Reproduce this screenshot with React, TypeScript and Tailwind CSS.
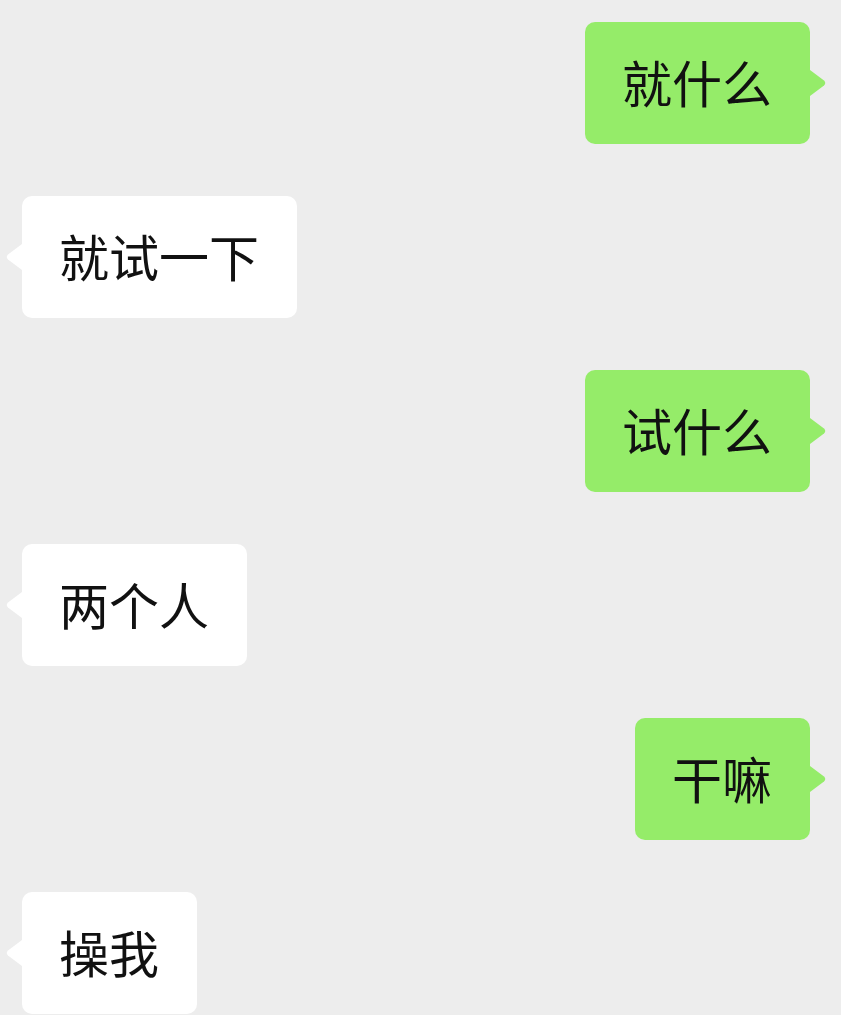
import React from "react";

type Msg = { text: string; mine: boolean };

const messages: Msg[] = [
  { text: "就什么", mine: true },
  { text: "就试一下", mine: false },
  { text: "试什么", mine: true },
  { text: "两个人", mine: false },
  { text: "干嘛", mine: true },
  { text: "操我", mine: false },
];

function Bubble({ text, mine }: Msg) {
  return (
    <div className={mine ? "flex justify-end pr-[31px]" : "flex justify-start pl-[22px]"}>
      <div
        className={
          mine
            ? "relative flex h-[122px] items-center rounded-[10px] bg-[#95ec69] pl-[37px] pr-[38px]"
            : "relative flex h-[122px] items-center rounded-[10px] bg-white pl-[37px] pr-[38px]"
        }
      >
        <span className="mb-[5px] text-[50px] leading-none text-[#111111]">{text}</span>
        {mine ? (
          <svg
            className="absolute left-full top-1/2 -translate-y-1/2"
            width="17"
            height="26"
            viewBox="0 0 17 26"
          >
            <path d="M0 0 L14 10.5 Q16.5 13 14 15.5 L0 26 Z" fill="#95ec69" />
          </svg>
        ) : (
          <svg
            className="absolute right-full top-1/2 -translate-y-1/2"
            width="17"
            height="26"
            viewBox="0 0 17 26"
          >
            <path d="M17 0 L3 10.5 Q0.5 13 3 15.5 L17 26 Z" fill="#ffffff" />
          </svg>
        )}
      </div>
    </div>
  );
}

export default function App() {
  return (
    <div
      className="flex h-[1015px] w-full flex-col gap-[52px] overflow-hidden bg-[#ededed] pt-[22px]"
      style={{ fontFamily: '"Noto Sans CJK SC", "Noto Sans", sans-serif' }}
    >
      {messages.map((m, i) => (
        <Bubble key={i} {...m} />
      ))}
    </div>
  );
}
